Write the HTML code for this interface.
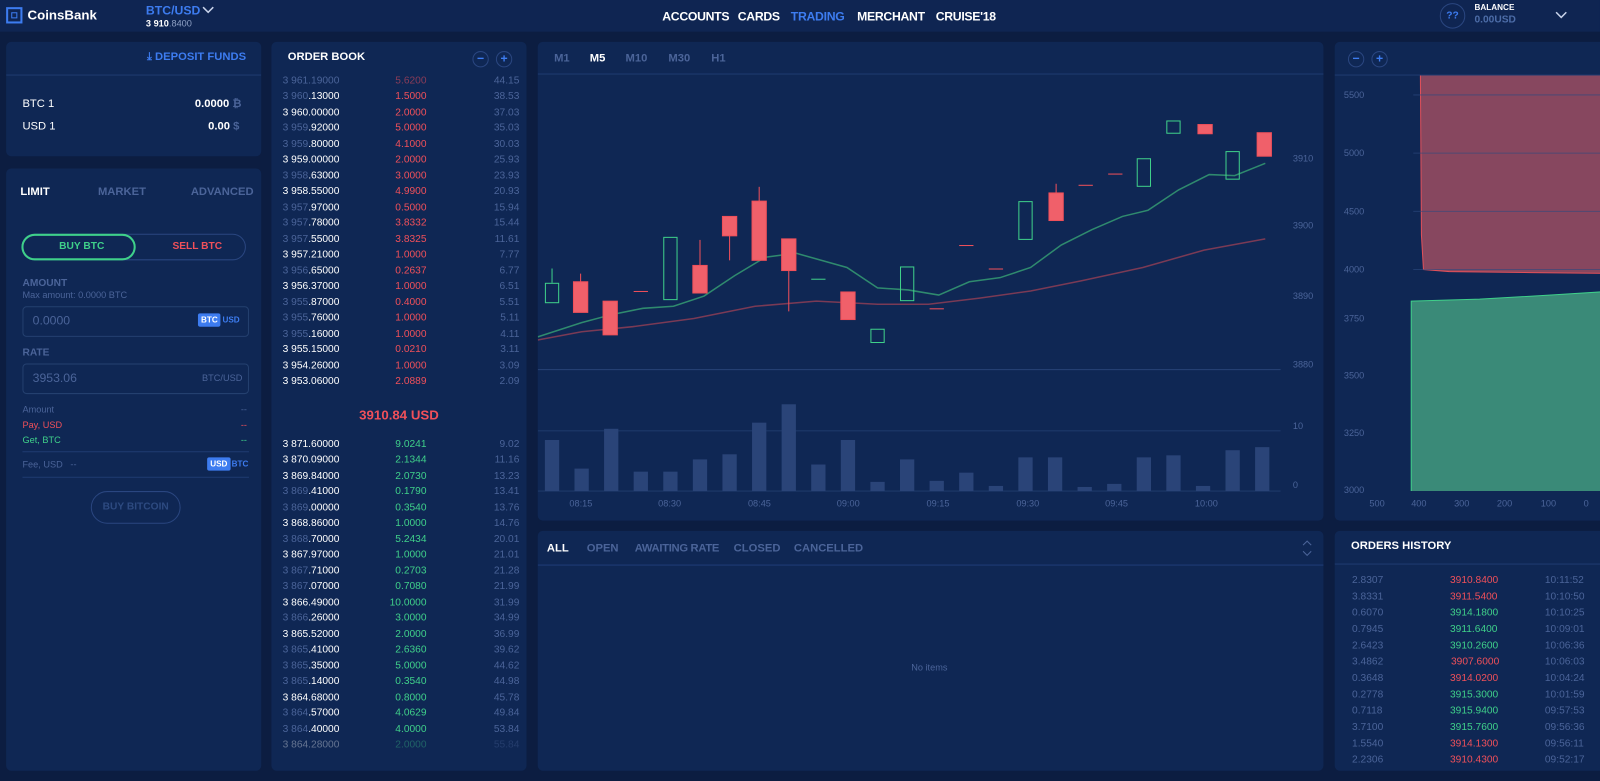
<!DOCTYPE html>
<html><head><meta charset="utf-8"><style>
*{box-sizing:border-box;margin:0;padding:0}
body{width:1600px;height:781px;overflow:hidden;background:#0c1d41;font-family:"Liberation Sans",sans-serif;color:#fff;position:relative;font-size:11px}
#w{position:absolute;left:0;top:0;width:1568px;height:765px;transform:scale(1.0204,1.0209);transform-origin:0 0}
.hdr{position:absolute;left:0;top:0;width:1568px;height:31px;background:#0f2552}
.p{position:absolute;background:#0f2754;border-radius:5px;overflow:hidden}
.a{position:absolute;white-space:nowrap}
.blue{color:#3d7cf0}.dim{color:#4b6499}.red{color:#f0505a}.grn{color:#3fd08a}
.b{font-weight:bold}
.line{position:absolute;height:1px;background:#1f3b70}
.ob .r{position:absolute;left:0;width:250px;height:15px;font-size:10px}
.ob span{position:absolute}
.ob .x{left:11px}.ob .y{right:98px}.ob .z{right:7px;color:#4b6499}
.ob .x span,.ob .r span span{position:static}
.circ{position:absolute;width:16px;height:16px;border:1px solid #2a4680;border-radius:50%;color:#3d7cf0;font-size:12px;line-height:13px;text-align:center;font-weight:bold}
.oh .r{position:absolute;left:0;width:260px;height:16px;font-size:10px}
.oh span{position:absolute}
</style></head><body><div id="w">
<div class="hdr">
<div class="a" style="left:6px;top:7px;width:16px;height:16px;border:2px solid #3d7cf0"></div>
<div class="a" style="left:11px;top:12px;width:6px;height:6px;border:1.5px solid #3d7cf0"></div>
<div class="a b" style="left:27px;top:7px;font-size:13px">CoinsBank</div>
<div class="a b blue" style="left:143px;top:3px;font-size:12px">BTC/USD</div>
<svg class="a" style="left:198px;top:6px" width="12" height="8"><path d="M1 1l5 5 5-5" stroke="#c8d3ea" stroke-width="1.5" fill="none"/></svg>
<div class="a" style="left:143px;top:18px;font-size:9px"><b>3 910</b><span style="color:#8ea0c4">.8400</span></div>
<div class="a b" style="left:649px;top:9px;font-size:12px;letter-spacing:-.3px">ACCOUNTS</div>
<div class="a b" style="left:723px;top:9px;font-size:12px;letter-spacing:-.3px">CARDS</div>
<div class="a b blue" style="left:775px;top:9px;font-size:12px;letter-spacing:-.3px">TRADING</div>
<div class="a b" style="left:840px;top:9px;font-size:12px;letter-spacing:-.3px">MERCHANT</div>
<div class="a b" style="left:917px;top:9px;font-size:12px;letter-spacing:-.3px">CRUISE'18</div>
<div class="a" style="left:1411px;top:3px;width:25px;height:25px;border:1px solid #2a4680;border-radius:50%;color:#3d7cf0;font-size:10px;font-weight:bold;text-align:center;line-height:23px">??</div>
<div class="a b" style="left:1445px;top:3px;font-size:8px">BALANCE</div>
<div class="a b" style="left:1445px;top:14px;font-size:10px;color:#4d6da8">0.00USD</div>
<svg class="a" style="left:1524px;top:11px" width="12" height="8"><path d="M1 1l5 5 5-5" stroke="#c8d3ea" stroke-width="1.5" fill="none"/></svg>
</div>

<div class="p" style="left:6px;top:41px;width:250px;height:112px">
<div class="a b blue" style="left:138px;top:9px;font-size:11px">⤓ DEPOSIT FUNDS</div>
<div class="line" style="left:0;top:32px;width:250px"></div>
<div class="a" style="left:16px;top:55px;font-size:11px">BTC 1</div>
<div class="a b" style="left:185px;top:55px;font-size:11px">0.0000 <span class="dim">₿</span></div>
<div class="a" style="left:16px;top:77px;font-size:11px">USD 1</div>
<div class="a b" style="left:198px;top:77px;font-size:11px">0.00 <span class="dim">$</span></div>
</div>

<div class="p" style="left:6px;top:165px;width:250px;height:590px">
<div class="a b" style="left:14px;top:17px;font-size:11px">LIMIT</div>
<div class="a b dim" style="left:90px;top:17px;font-size:11px">MARKET</div>
<div class="a b dim" style="left:181px;top:17px;font-size:11px">ADVANCED</div>
<div class="a" style="left:15px;top:64px;width:220px;height:26px;border:1px solid #2a4680;border-radius:13px"></div>
<div class="a" style="left:15px;top:64px;width:112px;height:26px;border:2px solid #3fd08a;border-radius:13px"></div>
<div class="a b grn" style="left:52px;top:71px;font-size:10px">BUY BTC</div>
<div class="a b red" style="left:163px;top:71px;font-size:10px">SELL BTC</div>
<div class="a b dim" style="left:16px;top:107px;font-size:10px">AMOUNT</div>
<div class="a dim" style="left:16px;top:119px;font-size:9px">Max amount: 0.0000 BTC</div>
<div class="a" style="left:16px;top:135px;width:222px;height:30px;border:1px solid #24406f;border-radius:4px"></div>
<div class="a dim" style="left:26px;top:142px;font-size:12px">0.0000</div>
<div class="a b" style="left:188px;top:142px;font-size:8px;background:#3d7cf0;padding:2px 3px;border-radius:2px">BTC</div>
<div class="a b blue" style="left:212px;top:144px;font-size:8px">USD</div>
<div class="a b dim" style="left:16px;top:175px;font-size:10px">RATE</div>
<div class="a" style="left:16px;top:191px;width:222px;height:30px;border:1px solid #24406f;border-radius:4px"></div>
<div class="a dim" style="left:26px;top:198px;font-size:12px">3953.06</div>
<div class="a dim" style="left:192px;top:200px;font-size:9px">BTC/USD</div>
<div class="a dim" style="left:16px;top:231px;font-size:9px">Amount</div><div class="a dim" style="left:230px;top:231px;font-size:9px">--</div>
<div class="a red" style="left:16px;top:246px;font-size:9px">Pay, USD</div><div class="a red" style="left:230px;top:246px;font-size:9px">--</div>
<div class="a grn" style="left:16px;top:261px;font-size:9px">Get, BTC</div><div class="a grn" style="left:230px;top:261px;font-size:9px">--</div>
<div class="line" style="left:16px;top:277px;width:222px"></div>
<div class="a dim" style="left:16px;top:285px;font-size:9px">Fee, USD &nbsp; --</div>
<div class="a b" style="left:197px;top:283px;font-size:8px;background:#3d7cf0;padding:2px 3px;border-radius:2px">USD</div>
<div class="a b blue" style="left:221px;top:285px;font-size:8px">BTC</div>
<div class="line" style="left:16px;top:302px;width:222px"></div>
<div class="a" style="left:83px;top:316px;width:88px;height:32px;border:1px solid #2a4680;border-radius:16px;color:#2d4a80;font-weight:bold;font-size:10px;text-align:center;line-height:30px">BUY BITCOIN</div>
</div>

<div class="p ob" style="left:266px;top:41px;width:250px;height:714px">
<div class="a b" style="left:16px;top:9px;font-size:11px">ORDER BOOK</div>
<span class="circ" style="left:197px;top:9px">−</span><span class="circ" style="left:220px;top:9px">+</span>
<div class="r" style="top:33px"><span class="x dim">3 961.19000</span><span class="y" style="color:#8a3c58">5.6200</span><span class="z">44.15</span></div>
<div class="r" style="top:48px"><span class="x"><span class="dim">3 960</span>.13000</span><span class="y red">1.5000</span><span class="z">38.53</span></div>
<div class="r" style="top:64px"><span class="x">3 960.00000</span><span class="y red">2.0000</span><span class="z">37.03</span></div>
<div class="r" style="top:79px"><span class="x"><span class="dim">3 959</span>.92000</span><span class="y red">5.0000</span><span class="z">35.03</span></div>
<div class="r" style="top:95px"><span class="x"><span class="dim">3 959</span>.80000</span><span class="y red">4.1000</span><span class="z">30.03</span></div>
<div class="r" style="top:110px"><span class="x">3 959.00000</span><span class="y red">2.0000</span><span class="z">25.93</span></div>
<div class="r" style="top:126px"><span class="x"><span class="dim">3 958</span>.63000</span><span class="y red">3.0000</span><span class="z">23.93</span></div>
<div class="r" style="top:141px"><span class="x">3 958.55000</span><span class="y red">4.9900</span><span class="z">20.93</span></div>
<div class="r" style="top:157px"><span class="x"><span class="dim">3 957</span>.97000</span><span class="y red">0.5000</span><span class="z">15.94</span></div>
<div class="r" style="top:172px"><span class="x"><span class="dim">3 957</span>.78000</span><span class="y red">3.8332</span><span class="z">15.44</span></div>
<div class="r" style="top:188px"><span class="x"><span class="dim">3 957</span>.55000</span><span class="y red">3.8325</span><span class="z">11.61</span></div>
<div class="r" style="top:203px"><span class="x">3 957.21000</span><span class="y red">1.0000</span><span class="z">7.77</span></div>
<div class="r" style="top:219px"><span class="x"><span class="dim">3 956</span>.65000</span><span class="y red">0.2637</span><span class="z">6.77</span></div>
<div class="r" style="top:234px"><span class="x">3 956.37000</span><span class="y red">1.0000</span><span class="z">6.51</span></div>
<div class="r" style="top:250px"><span class="x"><span class="dim">3 955</span>.87000</span><span class="y red">0.4000</span><span class="z">5.51</span></div>
<div class="r" style="top:265px"><span class="x"><span class="dim">3 955</span>.76000</span><span class="y red">1.0000</span><span class="z">5.11</span></div>
<div class="r" style="top:281px"><span class="x"><span class="dim">3 955</span>.16000</span><span class="y red">1.0000</span><span class="z">4.11</span></div>
<div class="r" style="top:296px"><span class="x">3 955.15000</span><span class="y red">0.0210</span><span class="z">3.11</span></div>
<div class="r" style="top:312px"><span class="x">3 954.26000</span><span class="y red">1.0000</span><span class="z">3.09</span></div>
<div class="r" style="top:327px"><span class="x">3 953.06000</span><span class="y red">2.0889</span><span class="z">2.09</span></div>
<div class="r b red" style="top:358px;font-size:13px;height:18px"><span style="left:86px">3910.84 USD</span></div>
<div class="r" style="top:389px"><span class="x">3 871.60000</span><span class="y grn">9.0241</span><span class="z">9.02</span></div>
<div class="r" style="top:404px"><span class="x">3 870.09000</span><span class="y grn">2.1344</span><span class="z">11.16</span></div>
<div class="r" style="top:420px"><span class="x">3 869.84000</span><span class="y grn">2.0730</span><span class="z">13.23</span></div>
<div class="r" style="top:435px"><span class="x"><span class="dim">3 869</span>.41000</span><span class="y grn">0.1790</span><span class="z">13.41</span></div>
<div class="r" style="top:451px"><span class="x"><span class="dim">3 869</span>.00000</span><span class="y grn">0.3540</span><span class="z">13.76</span></div>
<div class="r" style="top:466px"><span class="x">3 868.86000</span><span class="y grn">1.0000</span><span class="z">14.76</span></div>
<div class="r" style="top:482px"><span class="x"><span class="dim">3 868</span>.70000</span><span class="y grn">5.2434</span><span class="z">20.01</span></div>
<div class="r" style="top:497px"><span class="x">3 867.97000</span><span class="y grn">1.0000</span><span class="z">21.01</span></div>
<div class="r" style="top:513px"><span class="x"><span class="dim">3 867</span>.71000</span><span class="y grn">0.2703</span><span class="z">21.28</span></div>
<div class="r" style="top:528px"><span class="x"><span class="dim">3 867</span>.07000</span><span class="y grn">0.7080</span><span class="z">21.99</span></div>
<div class="r" style="top:544px"><span class="x">3 866.49000</span><span class="y grn">10.0000</span><span class="z">31.99</span></div>
<div class="r" style="top:559px"><span class="x"><span class="dim">3 866</span>.26000</span><span class="y grn">3.0000</span><span class="z">34.99</span></div>
<div class="r" style="top:575px"><span class="x">3 865.52000</span><span class="y grn">2.0000</span><span class="z">36.99</span></div>
<div class="r" style="top:590px"><span class="x"><span class="dim">3 865</span>.41000</span><span class="y grn">2.6360</span><span class="z">39.62</span></div>
<div class="r" style="top:606px"><span class="x"><span class="dim">3 865</span>.35000</span><span class="y grn">5.0000</span><span class="z">44.62</span></div>
<div class="r" style="top:621px"><span class="x"><span class="dim">3 865</span>.14000</span><span class="y grn">0.3540</span><span class="z">44.98</span></div>
<div class="r" style="top:637px"><span class="x">3 864.68000</span><span class="y grn">0.8000</span><span class="z">45.78</span></div>
<div class="r" style="top:652px"><span class="x"><span class="dim">3 864</span>.57000</span><span class="y grn">4.0629</span><span class="z">49.84</span></div>
<div class="r" style="top:668px"><span class="x"><span class="dim">3 864</span>.40000</span><span class="y grn">4.0000</span><span class="z">53.84</span></div>
<div class="r" style="top:683px;opacity:.35"><span class="x">3 864.28000</span><span class="y grn">2.0000</span><span class="z">55.84</span></div>
</div>

<div class="p" style="left:527px;top:41px;width:770px;height:469px">
<div class="a b dim" style="left:16px;top:10px;font-size:11px">M1</div>
<div class="a b" style="left:51px;top:10px;font-size:11px">M5</div>
<div class="a b dim" style="left:86px;top:10px;font-size:11px">M10</div>
<div class="a b dim" style="left:128px;top:10px;font-size:11px">M30</div>
<div class="a b dim" style="left:170px;top:10px;font-size:11px">H1</div>
<div class="line" style="left:0;top:31px;width:770px"></div>
<svg class="a" style="left:0;top:0" width="770" height="469">
<g transform="translate(-527,-41)">
<line x1="527" x2="1255" y1="362" y2="362" stroke="#243f72"/>
<line x1="527" x2="1255" y1="422" y2="422" stroke="#1d3869"/>
<line x1="527" x2="1255" y1="481" y2="481" stroke="#1d3869"/>
<g fill="#2a4478">
<rect x="534" y="431" width="14" height="50"/><rect x="563" y="459" width="14" height="22"/><rect x="592" y="420" width="14" height="61"/><rect x="621" y="462" width="14" height="19"/><rect x="650" y="462" width="14" height="19"/><rect x="679" y="450" width="14" height="31"/><rect x="708" y="445" width="14" height="36"/><rect x="737" y="414" width="14" height="67"/><rect x="766" y="396" width="14" height="85"/><rect x="795" y="455" width="14" height="26"/><rect x="824" y="431" width="14" height="50"/><rect x="853" y="472" width="14" height="9"/><rect x="882" y="450" width="14" height="31"/><rect x="911" y="471" width="14" height="10"/><rect x="940" y="463" width="14" height="18"/><rect x="969" y="476" width="14" height="5"/><rect x="998" y="448" width="14" height="33"/><rect x="1027" y="448" width="14" height="33"/><rect x="1056" y="477" width="14" height="4"/><rect x="1085" y="474" width="14" height="7"/><rect x="1114" y="448" width="14" height="33"/><rect x="1143" y="446" width="14" height="35"/><rect x="1172" y="476" width="14" height="5"/><rect x="1201" y="441" width="14" height="40"/><rect x="1230" y="438" width="14" height="43"/>
</g>
<polyline fill="none" stroke="#7a3a55" stroke-width="1.5" points="527,333 570,325 620,320 680,312 740,300 800,295 860,298 910,298 960,292 1010,285 1060,275 1120,262 1180,245 1240,234"/>
<polyline fill="none" stroke="#2f8a6e" stroke-width="1.5" points="527,330 570,316 600,308 630,302 660,300 690,290 720,270 750,252 780,248 830,262 860,282 890,284 920,289 950,276 980,272 1010,262 1040,240 1070,225 1100,212 1125,206 1155,186 1185,171 1210,172 1240,160"/>
<g stroke="#3fd08a" fill="none"><rect x="534.5" y="277.5" width="13" height="19"/><line x1="541" y1="263" x2="541" y2="277"/><rect x="650.5" y="232.5" width="13" height="61"/><line x1="795" y1="273.5" x2="809" y2="273.5"/><rect x="853.5" y="322.5" width="13" height="13"/><rect x="882.5" y="261.5" width="13" height="33"/><rect x="998.5" y="197.5" width="13" height="37"/><rect x="1114.5" y="155.5" width="13" height="27"/><rect x="1143.5" y="118.5" width="13" height="12"/><rect x="1201.5" y="148.5" width="13" height="27"/></g>
<g stroke="#f0505a" fill="#f0606a"><line x1="569" y1="268" x2="569" y2="306"/><rect x="562" y="276" width="14" height="30"/><rect x="591" y="295" width="14" height="33"/><line x1="621" y1="285.5" x2="635" y2="285.5"/><line x1="686" y1="235" x2="686" y2="287"/><rect x="679" y="260" width="14" height="27"/><line x1="715" y1="212" x2="715" y2="255"/><rect x="708" y="212" width="14" height="19"/><line x1="744" y1="183" x2="744" y2="255"/><rect x="737" y="197" width="14" height="58"/><line x1="773" y1="234" x2="773" y2="305"/><rect x="766" y="234" width="14" height="31"/><rect x="824" y="286" width="14" height="27"/><line x1="911" y1="302.5" x2="925" y2="302.5"/><line x1="940" y1="240.5" x2="954" y2="240.5"/><line x1="969" y1="263.5" x2="983" y2="263.5"/><line x1="1035" y1="180" x2="1035" y2="216"/><rect x="1028" y="189" width="14" height="27"/><line x1="1057" y1="181.5" x2="1071" y2="181.5"/><line x1="1086" y1="170.5" x2="1100" y2="170.5"/><rect x="1174" y="122" width="14" height="9"/><rect x="1232" y="130" width="14" height="23"/></g>
<g fill="#4b6499" font-size="9" font-family="Liberation Sans"><text x="1267" y="158">3910</text><text x="1267" y="224">3900</text><text x="1267" y="293">3890</text><text x="1267" y="360">3880</text><text x="1267" y="420">10</text><text x="1267" y="478">0</text>
<text x="558" y="496">08:15</text><text x="645" y="496">08:30</text><text x="733" y="496">08:45</text><text x="820" y="496">09:00</text><text x="908" y="496">09:15</text><text x="996" y="496">09:30</text><text x="1083" y="496">09:45</text><text x="1171" y="496">10:00</text></g>
</g></svg>
</div>

<div class="p" style="left:527px;top:520px;width:770px;height:235px">
<div class="a b" style="left:9px;top:11px;font-size:11px">ALL</div>
<div class="a b dim" style="left:48px;top:11px;font-size:11px">OPEN</div>
<div class="a b dim" style="left:95px;top:11px;font-size:11px;letter-spacing:-.3px">AWAITING RATE</div>
<div class="a b dim" style="left:192px;top:11px;font-size:11px">CLOSED</div>
<div class="a b dim" style="left:251px;top:11px;font-size:11px">CANCELLED</div>
<svg class="a" style="left:748px;top:8px" width="12" height="18"><path d="M2 6l4-4 4 4M2 12l4 4 4-4" stroke="#4b6499" fill="none"/></svg>
<div class="line" style="left:0;top:33px;width:770px;background:#1f3d78"></div>
<div class="a dim" style="left:366px;top:129px;font-size:9px">No items</div>
</div>

<div class="p" style="left:1308px;top:41px;width:300px;height:469px">
<span class="circ" style="left:13px;top:9px">−</span><span class="circ" style="left:36px;top:9px">+</span>
<div class="line" style="left:0;top:32px;width:300px"></div>
<svg class="a" style="left:0;top:0" width="300" height="469"><g transform="translate(-1308,-41)">
<path d="M1392 74 L1600 74 L1600 268 L1500 267 L1420 266 L1395 264 L1393 230 Z" fill="#87475f"/>
<path d="M1392 74 L1393 230 L1395 264 L1420 266 L1500 267 L1600 268" stroke="#e0505a" fill="none"/>
<path d="M1383 295 L1450 293 L1520 289 L1600 284 L1600 481 L1383 481 Z" fill="#3a8a78"/>
<path d="M1383 481 L1383 295 L1450 293 L1520 289 L1600 284" stroke="#3fd08a" fill="none"/>
<g stroke="#2c4a80" stroke-width="1" opacity=".6"><line x1="1385" x2="1600" y1="93" y2="93"/><line x1="1385" x2="1600" y1="150" y2="150"/><line x1="1385" x2="1600" y1="207" y2="207"/><line x1="1385" x2="1600" y1="264" y2="264"/></g>
<g fill="#4b6499" font-size="9" font-family="Liberation Sans"><text x="1317" y="96">5500</text><text x="1317" y="153">5000</text><text x="1317" y="210">4500</text><text x="1317" y="267">4000</text><text x="1317" y="315">3750</text><text x="1317" y="371">3500</text><text x="1317" y="427">3250</text><text x="1317" y="483">3000</text>
<text x="1342" y="496">500</text><text x="1383" y="496">400</text><text x="1425" y="496">300</text><text x="1467" y="496">200</text><text x="1510" y="496">100</text><text x="1552" y="496">0</text></g>
</g></svg>
</div>

<div class="p oh" style="left:1308px;top:520px;width:300px;height:235px">
<div class="a b" style="left:16px;top:9px;font-size:11px">ORDERS HISTORY</div>
<div class="line" style="left:0;top:32px;width:300px"></div>
<div class="r" style="top:43px"><span class="dim" style="left:17px">2.8307</span><span class="red" style="left:113px">3910.8400</span><span class="dim" style="left:206px">10:11:52</span></div>
<div class="r" style="top:59px"><span class="dim" style="left:17px">3.8331</span><span class="red" style="left:113px">3911.5400</span><span class="dim" style="left:206px">10:10:50</span></div>
<div class="r" style="top:75px"><span class="dim" style="left:17px">0.6070</span><span class="grn" style="left:113px">3914.1800</span><span class="dim" style="left:206px">10:10:25</span></div>
<div class="r" style="top:91px"><span class="dim" style="left:17px">0.7945</span><span class="grn" style="left:113px">3911.6400</span><span class="dim" style="left:206px">10:09:01</span></div>
<div class="r" style="top:107px"><span class="dim" style="left:17px">2.6423</span><span class="grn" style="left:113px">3910.2600</span><span class="dim" style="left:206px">10:06:36</span></div>
<div class="r" style="top:123px"><span class="dim" style="left:17px">3.4862</span><span class="red" style="left:114px">3907.6000</span><span class="dim" style="left:206px">10:06:03</span></div>
<div class="r" style="top:139px"><span class="dim" style="left:17px">0.3648</span><span class="red" style="left:113px">3914.0200</span><span class="dim" style="left:206px">10:04:24</span></div>
<div class="r" style="top:155px"><span class="dim" style="left:17px">0.2778</span><span class="grn" style="left:113px">3915.3000</span><span class="dim" style="left:206px">10:01:59</span></div>
<div class="r" style="top:171px"><span class="dim" style="left:17px">0.7118</span><span class="grn" style="left:113px">3915.9400</span><span class="dim" style="left:206px">09:57:53</span></div>
<div class="r" style="top:187px"><span class="dim" style="left:17px">3.7100</span><span class="grn" style="left:113px">3915.7600</span><span class="dim" style="left:206px">09:56:36</span></div>
<div class="r" style="top:203px"><span class="dim" style="left:17px">1.5540</span><span class="red" style="left:113px">3914.1300</span><span class="dim" style="left:206px">09:56:11</span></div>
<div class="r" style="top:219px"><span class="dim" style="left:17px">2.2306</span><span class="red" style="left:113px">3910.4300</span><span class="dim" style="left:206px">09:52:17</span></div>
</div>
</div></body></html>
